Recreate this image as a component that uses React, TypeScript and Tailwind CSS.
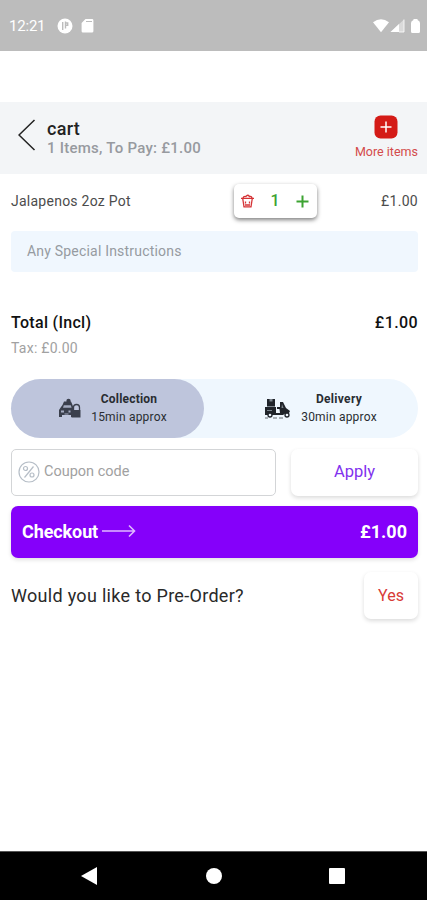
import React from "react";

function StatusBar() {
  return (
    <div className="flex h-[51px] items-center justify-between bg-[#bcbcbc] pt-[1px] pr-[7px] pl-[9px] text-white">
      <div className="flex items-center">
        <span className="w-[48px] text-[15px] leading-4 tracking-[-0.2px]">12:21</span>
        <svg width="16" height="16" viewBox="0 0 16 16">
          <circle cx="8" cy="8" r="7.5" fill="#fff" />
          <path d="M5.700 4v8M8.500 3.500v7M8.500 5h2.200v2.200H8.500" stroke="#bcbcbc" strokeWidth="1.4" fill="none" />
        </svg>
        <svg className="ml-[8px]" width="13" height="14" viewBox="0 0 13 14">
          <path d="M4.5 0H11a1.4 1.4 0 0 1 1.4 1.4v10.8a1.4 1.4 0 0 1-1.4 1.4H2a1.4 1.4 0 0 1-1.4-1.4V4z" fill="#fff" />
          <path d="M5 2.500h6" stroke="#bcbcbc" strokeWidth="1" />
        </svg>
      </div>
      <div className="flex items-center">
        <svg width="16" height="14" viewBox="0 0 16 14">
          <path d="M0 3.2Q8-2.8 16 3.2L8 13.3z" fill="#fff" />
        </svg>
        <svg className="ml-[1px]" width="15" height="14" viewBox="0 0 15 14">
          <path d="M14 .5V13H.5z" fill="#fff" fillOpacity=".45" />
          <path d="M9 5v8H.5z" fill="#fff" />
          <path d="M14 .5V13H9" fill="none" stroke="#fff" strokeWidth=".8" />
        </svg>
        <svg className="ml-[6px]" width="9" height="14" viewBox="0 0 9 14">
          <path d="M2.500 1V0h4v1Q9 2 9 4v8.500A1.500 1.500 0 0 1 7.500 14h-6A1.500 1.500 0 0 1 0 12.500V4Q0 2 2.500 1z" fill="#fff" />
        </svg>
      </div>
    </div>
  );
}

function CartHeader() {
  return (
    <header className="flex h-[72px] bg-[#f3f5f7] pr-[9px] pl-[18px]">
      <svg className="mt-[16px]" width="18" height="34" viewBox="0 0 18 34">
        <path d="M16.500 2L1 17l15.500 15" fill="none" stroke="#222" strokeWidth="1.500" />
      </svg>
      <div className="ml-[11px] flex-1 pt-[17px]">
        <h1 className="text-[18px] leading-[20px] font-medium tracking-[0.3px] text-[#222]">cart</h1>
        <p className="text-[15px] leading-[18px] font-medium tracking-[0.25px] text-[#979a9f]">1 Items, To Pay: £1.00</p>
      </div>
      <button className="flex flex-col items-center pt-[13px]">
        <svg width="24" height="24" viewBox="0 0 24 24">
          <rect x=".5" y=".5" width="23" height="23" rx="6" fill="#d41b17" />
          <path d="M12 6.500v11M6.500 12h11" stroke="#fff" strokeWidth="1.500" />
        </svg>
        <span className="mt-[6px] text-[12.5px] leading-[14px] text-[#d34b4b]">More items</span>
      </button>
    </header>
  );
}

function CollectionIcon() {
  return (
    <svg width="24" height="22" viewBox="0 0 24 22">
      <g fill="#3a3f4c">
        <path d="M4.500 7L6 3.500h7L14.500 7 15.500 10v9H13v-2H4v2H1v-7l2-3z" />
        <circle cx="10.500" cy="3" r="2.200" />
        <path d="M13.500 12h9v7.500h-9z" />
      </g>
      <path d="M15.500 12V9.500a3 3 0 0 1 6 0V12" fill="none" stroke="#3a3f4c" strokeWidth="1.300" />
      <path d="M5.800 7.300h7l.8 2.400H5z" fill="#a5acc1" />
      <path d="M3 12.500h3v2H3zM10.500 12.500h2v2h-2zM6.500 15.500h4v1h-4z" fill="#a5acc1" />
    </svg>
  );
}

function DeliveryIcon() {
  return (
    <svg width="26" height="22" viewBox="0 0 26 22">
      <path d="M2 1h8v7H2zM0 9h11v6h4l-.5-4H12V9h3V4h3l3 6 4 3-1 2h-3l-3 2H0z" fill="#20242a" />
      <path d="M4.500 1h3v2.500h-3zM2 8h8v1H2zM2 12h5v1H2zM17 6l1.500 4h-2z" fill="#7d868e" />
      <circle cx="5" cy="17" r="2" fill="#eff7fe" stroke="#20242a" strokeWidth="1.300" />
      <circle cx="22" cy="17" r="2" fill="#eff7fe" stroke="#20242a" strokeWidth="1.300" />
      <path d="M0 20h3M8 20h4M14 20h4" stroke="#656a70" strokeWidth="1" />
    </svg>
  );
}

function CartLine() {
  return (
    <div className="flex h-[34px] items-center text-[14px] text-[#4c4c4c]">
      <span className="w-[223px] tracking-[0.25px]">Jalapenos 2oz Pot</span>
      <div className="flex h-[34px] w-[83px] items-center rounded-[5px] bg-white pr-[8px] pl-[7px] shadow-[0_2px_4px_rgba(0,0,0,0.5)]">
        <svg width="13" height="14" viewBox="0 0 13 14" fill="none" stroke="#d53336" strokeWidth="1.300">
          <path d="M0 4.300h13M2 4Q2.500 2 5 2.500 6.500 0 8.500 2.500 10.500 2 11 4M1.800 5l1.200 7.800h7L11.200 5M4.500 7.500v2M8.500 7.500v2M4 11h5" />
        </svg>
        <span className="flex-1 text-center text-[16px] font-medium text-[#3da332]">1</span>
        <svg width="13" height="13" viewBox="0 0 13 13">
          <path d="M6.500.5v12M.5 6.500h12" stroke="#3da332" strokeWidth="2" />
        </svg>
      </div>
      <span className="flex-1 text-right tracking-[0.3px]">£1.00</span>
    </div>
  );
}

function FulfilmentToggle() {
  return (
    <div className="mt-[22px] flex h-[59px] rounded-full bg-[#eff7fe] text-[12px] text-[#292d32]">
      <div className="flex w-[193px] items-center rounded-full bg-[#bec5dc] pl-[47px]">
        <CollectionIcon />
        <div className="-mt-[1px] ml-[9px] w-[76px] text-center leading-[18px] whitespace-nowrap">
          <div className="font-bold tracking-[0.2px]">Collection</div>
          <div className="tracking-[0.2px]">15min approx</div>
        </div>
      </div>
      <div className="flex flex-1 items-center pl-[61px]">
        <DeliveryIcon />
        <div className="-mt-[1px] ml-[10px] w-[76px] text-center leading-[18px] whitespace-nowrap">
          <div className="font-bold tracking-[0.3px]">Delivery</div>
          <div className="tracking-[0.2px]">30min approx</div>
        </div>
      </div>
    </div>
  );
}

function CouponRow() {
  return (
    <div className="mt-[11px] flex h-[47px] gap-[15px]">
      <div className="flex w-[265px] items-center rounded-[5px] border border-[#d3d5d7] pb-[2px] pl-[6px]">
        <svg width="22" height="22" viewBox="0 0 22 22" fill="none" stroke="#b6bec7" strokeWidth="1.200">
          <circle cx="11" cy="11" r="10" />
          <path d="M15.500 5.500l-9 11" />
          <circle cx="7.500" cy="7.500" r="2" />
          <circle cx="14" cy="14" r="2" />
        </svg>
        <span className="ml-[4px] text-[14.5px] text-[#a1a1a1]">Coupon code</span>
      </div>
      <button className="flex-1 rounded-[7px] bg-white text-[16.5px] text-[#8132ee] shadow-[0_2px_4px_rgba(0,0,0,0.14)]">Apply</button>
    </div>
  );
}

function NavigationBar() {
  return (
    <nav className="flex h-[49px] items-center justify-between border-t border-[#555] bg-black pr-[82px] pl-[81px]">
      <svg width="17" height="18" viewBox="0 0 17 18"><path d="M0 9L16 0v18z" fill="#fff" /></svg>
      <div className="ml-[1px] size-[16px] rounded-full bg-white" />
      <div className="size-[16px] rounded-[1px] bg-white" />
    </nav>
  );
}

export default function App() {
  return (
    <div className="flex h-[900px] w-[427px] flex-col overflow-hidden bg-white font-[Roboto,sans-serif]">
      <StatusBar />
      <div className="h-[51px]" />
      <CartHeader />
      <main className="flex-1 pt-[10px] pr-[9px] pl-[11px]">
        <CartLine />
        <div className="mt-[13px] flex h-[41px] items-center rounded-[4px] bg-[#f0f7fe] pl-[16px] text-[14px] tracking-[0.2px] text-[#969ba1]">Any Special Instructions</div>
        <div className="mt-[40px] flex justify-between text-[16px] leading-[22px] font-medium text-[#111]">
          <span className="tracking-[0.3px]">Total (Incl)</span>
          <span className="tracking-[0.4px]">£1.00</span>
        </div>
        <p className="mt-[5px] text-[14px] leading-[18px] tracking-[0.25px] text-[#a1a1a1]">Tax: £0.00</p>
        <FulfilmentToggle />
        <CouponRow />
        <button className="mt-[10px] flex h-[52px] w-full items-center rounded-[7px] bg-[#8500fa] px-[11px] pb-[2px] text-[18px] font-bold text-white shadow-[0_2px_4px_rgba(0,0,0,0.12)]">
          <span className="tracking-[-0.1px]">Checkout</span>
          <svg className="ml-[4px]" width="34" height="14" viewBox="0 0 34 14">
            <path d="M0 7h32M27 1.500L32.500 7 27 12.500" fill="none" stroke="#dfb8ff" strokeWidth="1.600" />
          </svg>
          <span className="ml-auto">£1.00</span>
        </button>
        <div className="mt-[14px] flex h-[47px] items-center justify-between">
          <span className="text-[18px] tracking-[0.3px] text-[#292929]">Would you like to Pre-Order?</span>
          <button className="h-[47px] w-[54px] rounded-[7px] bg-white text-[16px] text-[#d83a37] shadow-[0_2px_4px_rgba(0,0,0,0.14)]">Yes</button>
        </div>
      </main>
      <NavigationBar />
    </div>
  );
}
